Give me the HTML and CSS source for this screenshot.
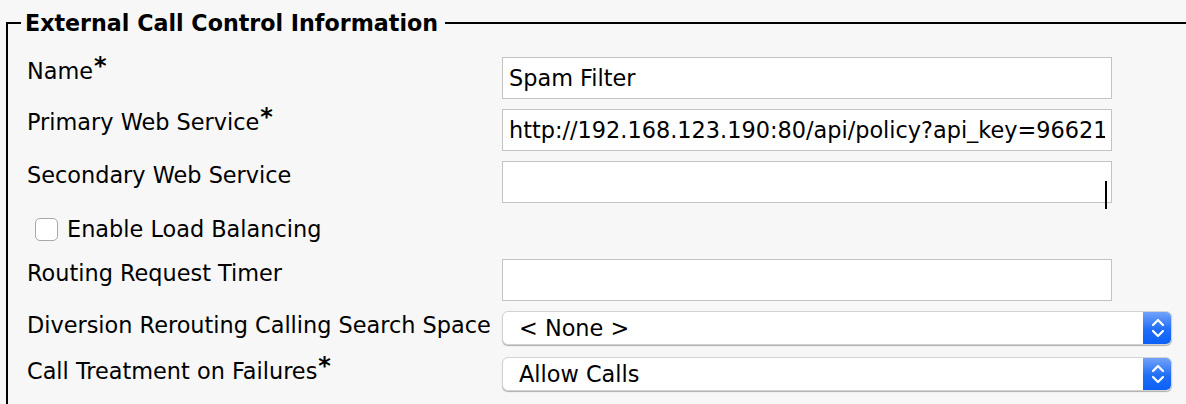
FILE: index.html
```html
<!DOCTYPE html>
<html>
<head>
<meta charset="utf-8">
<link rel="stylesheet" href="styles.css">
</head>
<body>
<fieldset class="panel">
  <legend class="panel-title">External Call Control Information</legend>
  <div class="row">
    <label class="lbl">Name<span class="req">*</span></label>
    <div class="field"><input class="txt" type="text" value="Spam Filter"></div>
  </div>
  <div class="row">
    <label class="lbl lbl-up">Primary Web Service<span class="req">*</span></label>
    <div class="field"><input class="txt" type="text" value="http://192.168.123.190:80/api/policy?api_key=96621b8f"></div>
  </div>
  <div class="row">
    <label class="lbl">Secondary Web Service</label>
    <div class="field"><input class="txt" type="text" value=""><span class="ibeam"></span></div>
  </div>
  <div class="row-check">
    <span class="check"></span>
    <span class="check-lbl">Enable Load Balancing</span>
  </div>
  <div class="row">
    <label class="lbl">Routing Request Timer</label>
    <div class="field"><input class="txt" type="text" value=""></div>
  </div>
  <div class="row row-sel">
    <label class="lbl">Diversion Rerouting Calling Search Space</label>
    <div class="field">
      <div class="sel"><span class="sel-text">&lt; None &gt;</span><span class="sel-btn"><svg width="14" height="22" viewBox="0 0 14 22"><path d="M2 8 L7 3 L12 8" fill="none" stroke="#fff" stroke-width="2.2" stroke-linecap="round" stroke-linejoin="round"/><path d="M2 14 L7 19 L12 14" fill="none" stroke="#fff" stroke-width="2.2" stroke-linecap="round" stroke-linejoin="round"/></svg></span></div>
    </div>
  </div>
  <div class="row row-sel">
    <label class="lbl">Call Treatment on Failures<span class="req">*</span></label>
    <div class="field">
      <div class="sel"><span class="sel-text">Allow Calls</span><span class="sel-btn"><svg width="14" height="22" viewBox="0 0 14 22"><path d="M2 8 L7 3 L12 8" fill="none" stroke="#fff" stroke-width="2.2" stroke-linecap="round" stroke-linejoin="round"/><path d="M2 14 L7 19 L12 14" fill="none" stroke="#fff" stroke-width="2.2" stroke-linecap="round" stroke-linejoin="round"/></svg></span></div>
    </div>
  </div>
</fieldset>
</body>
</html>
```

FILE: styles.css
```css
html, body {
  margin: 0;
  padding: 0;
  background: #f7f7f7;
  overflow: hidden;
  height: 404px;
}
body {
  font-family: "DejaVu Sans", Verdana, sans-serif;
  font-size: 22.4px;
  color: #000;
}
.panel {
  margin: 11px -40px 0 6px;
  border: 2px solid #000;
  border-bottom: none;
  padding: 22px 0 0 19px;
  min-height: 380px;
}
.panel-title {
  font-weight: bold;
  font-size: 22.2px;
  padding: 0 7px 0 4px;
  margin-left: -6px;
  line-height: 24px;
}
.row {
  display: grid;
  grid-template-columns: 475px 610px;
  align-items: start;
  height: 42px;
  margin-bottom: 10px;
}
.row-sel {
  grid-template-columns: 475px 670px;
  height: 34px;
  margin-bottom: 12px;
}
.lbl {
  padding-top: 1px;
  line-height: 26px;
  white-space: nowrap;
}
.lbl-up { padding-top: 0; }
.req {
  font-size: 24px;
  font-weight: bold;
  vertical-align: 5px;
  margin-left: 1px;
  line-height: 10px;
}
.field { position: relative; }
.txt {
  box-sizing: border-box;
  width: 610px;
  height: 42px;
  margin: 0;
  border: 1px solid #c3c3c3;
  background: #fff;
  padding: 0 6px;
  font-family: "DejaVu Sans", Verdana, sans-serif;
  font-size: 22.4px;
  color: #000;
  outline: none;
}
.ibeam {
  position: absolute;
  left: 603px;
  top: 20px;
  width: 2px;
  height: 28px;
  background: #000;
}
.row-check {
  display: flex;
  align-items: center;
  gap: 9px;
  margin: 6px 0 14px 8px;
  height: 32px;
}
.check {
  box-sizing: border-box;
  width: 23px;
  height: 23px;
  border: 1px solid #a9a9a9;
  border-radius: 5px;
  background: #fff;
}
.check-lbl { line-height: 26px; }
.sel {
  box-sizing: border-box;
  width: 670px;
  height: 34px;
  display: flex;
  align-items: center;
  justify-content: space-between;
  background: #fff;
  border: 1px solid #d2d2d2;
  border-radius: 6px;
  box-shadow: 0 1px 1px rgba(0,0,0,0.3);
  overflow: hidden;
}
.sel-text {
  padding-left: 16px;
  line-height: 24px;
}
.sel-btn {
  width: 29px;
  height: 34px;
  display: flex;
  align-items: center;
  justify-content: center;
  background: linear-gradient(#77a5fa, #1f6ef7 55%, #0a5ff6);
  margin-right: -1px;
}
```
